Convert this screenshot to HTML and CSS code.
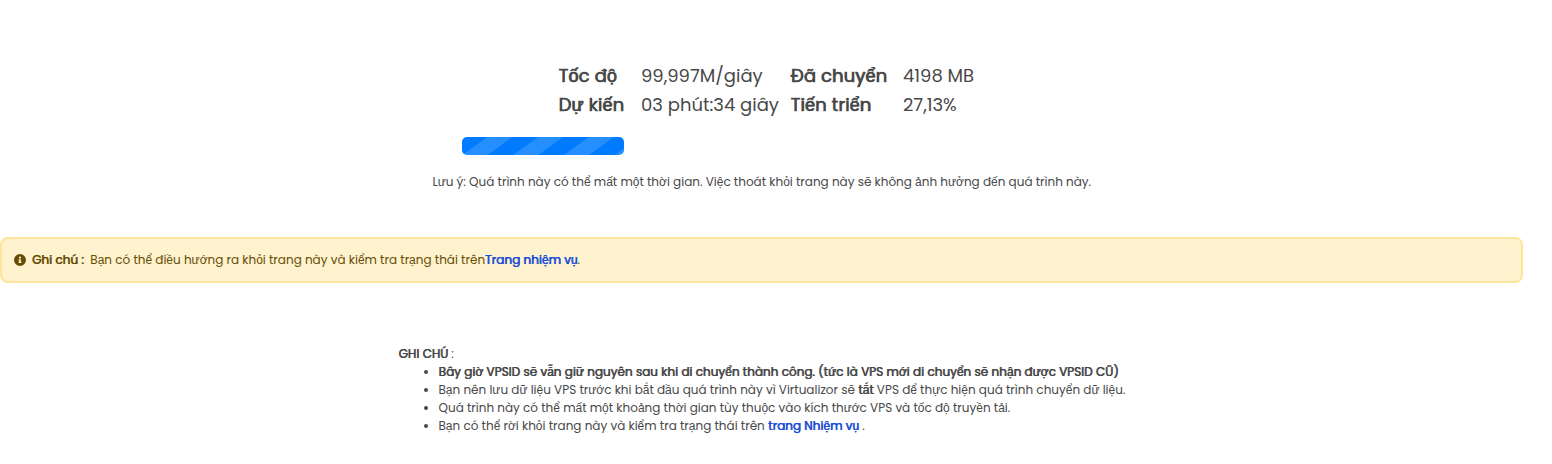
FILE: index.html
```html
<!DOCTYPE html>
<html lang="vi">
<head>
<meta charset="utf-8">
<title>VPS</title>
<link rel="stylesheet" href="styles.css">
</head>
<body>
<main class="page">
  <div class="stats">
    <b>Tốc độ</b><span>99,997M/giây</span><b>Đã chuyển</b><span>4198 MB</span>
    <b>Dự kiến</b><span>03 phút:34 giây</span><b>Tiến triển</b><span>27,13%</span>
  </div>
  <div class="progress"><div class="bar" style="width:27%"></div></div>
  <p class="hint">Lưu ý: Quá trình này có thể mất một thời gian. Việc thoát khỏi trang này sẽ không ảnh hưởng đến quá trình này.</p>
  <div class="alert">
    <svg class="info" viewBox="0 0 512 512"><path fill="currentColor" d="M256 0a256 256 0 1 0 0 512 256 256 0 0 0 0-512zm0 102a48 48 0 1 1 0 96 48 48 0 0 1 0-96zm64 272a14 14 0 0 1-14 14H206a14 14 0 0 1-14-14v-26a14 14 0 0 1 14-14h14v-58h-14a14 14 0 0 1-14-14v-26a14 14 0 0 1 14-14h72a14 14 0 0 1 14 14v98h14a14 14 0 0 1 14 14z"/></svg>
    <b class="alert-title">Ghi chú :</b><span>Bạn có thể điều hướng ra khỏi trang này và kiểm tra trạng thái trên</span><a class="link">Trang nhiệm vụ</a><span>.</span>
  </div>
  <section class="notes">
    <div><b>GHI CHÚ</b> :</div>
    <ul>
      <li><b>Bây giờ VPSID sẽ vẫn giữ nguyên sau khi di chuyển thành công. (tức là VPS mới di chuyển sẽ nhận được VPSID CŨ)</b></li>
      <li>Bạn nên lưu dữ liệu VPS trước khi bắt đầu quá trình này vì Virtualizor sẽ <b>tắt</b> VPS để thực hiện quá trình chuyển dữ liệu.</li>
      <li>Quá trình này có thể mất một khoảng thời gian tùy thuộc vào kích thước VPS và tốc độ truyền tải.</li>
      <li>Bạn có thể rời khỏi trang này và kiểm tra trạng thái trên <a class="link">trang Nhiệm vụ</a> .</li>
    </ul>
  </section>
</main>
</body>
</html>
```
FILE: styles.css
```css
* { box-sizing: border-box; }
body {
  margin: 0;
  background: #fff;
  color: #484848;
  font: 400 12px/18px Poppins, "Liberation Sans", sans-serif;
}
b, .link {
  font-weight: 400;
  letter-spacing: .025px;
  -webkit-text-stroke: .2px currentColor;
  text-shadow: .5px 0 0 currentColor;
}
.page { width: 1523px; padding-top: 61px; }
.stats {
  display: grid;
  grid-template-columns: 83px 149px 113px 82px;
  grid-auto-rows: 29px;
  width: 427px;
  margin-left: 558px;
  font-size: 18px;
  line-height: 29px;
  white-space: nowrap;
}
.stats b {
  padding-left: .5px;
  letter-spacing: .1px;
  -webkit-text-stroke-width: .35px;
  text-shadow: .6px 0 0 currentColor;
}
.progress { width: 600px; height: 18px; margin: 18px 0 0 462px; }
.bar {
  height: 18px;
  border-radius: 5px;
  background: repeating-linear-gradient(144deg, #007bff 0 14.6px, #268fff 15.2px 29.4px, #007bff 29.8px);
}
.hint { margin: 18px 0 0 432.5px; white-space: nowrap; }
.alert {
  display: flex;
  align-items: center;
  height: 46px;
  margin-top: 46px;
  padding-left: 12px;
  border: 2px solid #ffe599;
  border-radius: 8px;
  background: #fff2cf;
  color: #664d03;
  white-space: nowrap;
}
.info { width: 12px; height: 12px; margin-right: 6px; }
.alert-title { margin-right: 6.5px; }
.link { color: #1a4fd6; }
.notes { margin: 62px 0 0 398.5px; white-space: nowrap; }
.notes ul { margin: 0; padding-left: 40px; }
```
